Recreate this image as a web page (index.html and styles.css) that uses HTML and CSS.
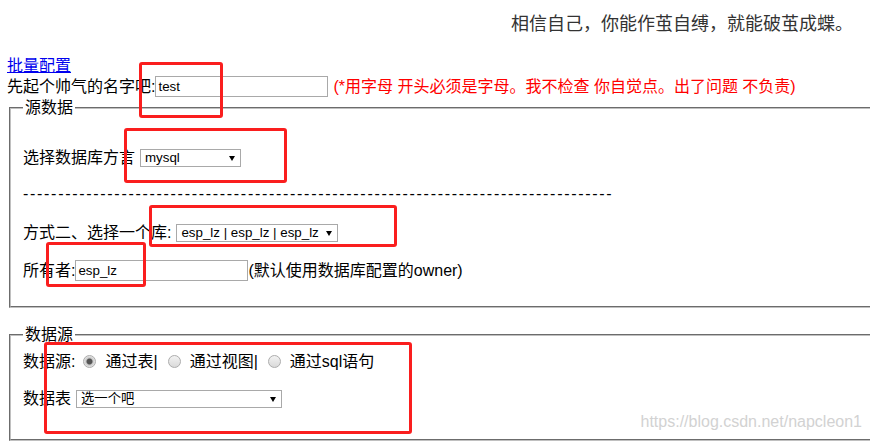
FILE: index.html
```html
<!DOCTYPE html>
<html lang="zh-CN">
<head>
    <meta charset="UTF-8">
    <meta name="viewport" content="width=device-width, initial-scale=1.0">
    <title>代码生成</title>
    <link rel="stylesheet" href="styles.css">
</head>
<body>
    <div class="quote">相信自己，你能作茧自缚，就能破茧成蝶。</div>

    <div class="row-link"><a href="#">批量配置</a></div>
    <div class="row">
        <span>先起个帅气的名字吧:</span><input type="text" class="name-input" value="test">
        <span class="warn">(*用字母 开头必须是字母。我不检查 你自觉点。出了问题 不负责)</span>
    </div>

    <fieldset class="box box-source">
        <legend>源数据</legend>
        <div class="row row-dialect">
            <span>选择数据库方言</span>
            <span class="pick pick-dialect">
                <select>
                    <option>mysql</option>
                    <option>oracle</option>
                </select>
            </span>
        </div>
        <div class="dashes">------------------------------------------------------------------------------------</div>
        <div class="row row-db">
            <span>方式二、选择一个库:</span>
            <span class="pick pick-db">
                <select>
                    <option>esp_lz | esp_lz | esp_lz</option>
                </select>
            </span>
        </div>
        <div class="row row-owner">
            <span>所有者:</span><input type="text" class="owner-input" value="esp_lz"><span>(默认使用数据库配置的owner)</span>
        </div>
    </fieldset>

    <fieldset class="box box-data">
        <legend>数据源</legend>
        <div class="row row-radio">
            <span>数据源:</span>
            <input type="radio" name="from" class="radio" checked>
            <span>通过表|</span>
            <input type="radio" name="from" class="radio">
            <span>通过视图|</span>
            <input type="radio" name="from" class="radio">
            <span>通过sql语句</span>
        </div>
        <div class="row row-table">
            <span>数据表</span>
            <span class="pick pick-table">
                <select>
                    <option>选一个吧</option>
                </select>
            </span>
        </div>
    </fieldset>

    <!-- annotation boxes drawn on the screenshot -->
    <div class="mark mark-name"></div>
    <div class="mark mark-dialect"></div>
    <div class="mark mark-db"></div>
    <div class="mark mark-owner"></div>
    <div class="mark mark-data"></div>

    <div class="watermark">https://blog.csdn.net/napcleon1</div>
</body>
</html>
```

FILE: styles.css
```css
html {
    overflow: hidden;
}
body {
    margin: 0;
    padding: 0 0 0 7px;
    font-family: "Liberation Sans", "Noto Sans CJK SC", sans-serif;
    font-size: 16px;
    line-height: 21px;
    color: #000;
    background: #fff;
}
.quote {
    text-align: right;
    font-size: 18px;
    color: #333;
    padding: 14px 17px 20px 0;
    line-height: 21px;
}
.row-link {
    height: 21px;
}
.row-link a {
    color: #0000ee;
}
.row {
    display: flex;
    align-items: center;
    height: 21px;
    white-space: nowrap;
}
.warn {
    color: #ff0000;
    margin-left: 5px;
}
input[type="text"] {
    box-sizing: border-box;
    width: 173px;
    height: 21px;
    margin: 0;
    padding: 1px 2px;
    border: 1px solid #a9a9a9;
    border-radius: 0;
    font-family: "Liberation Sans", "Noto Sans CJK SC", sans-serif;
    font-size: 13.33px;
    color: #000;
    outline: none;
}

/* fieldsets */
.box {
    margin: 0 -20px 0 2px;
    padding: 0 12px 25px;
    border: 2px groove #c0c0c0;
}
.box legend {
    padding: 0 2px;
    line-height: 21px;
}
.box-data {
    margin-top: 16px;
    padding-bottom: 30px;
}
.row-dialect {
    margin-top: 29px;
}
.dashes {
    margin-top: 15px;
    letter-spacing: 1.7px;
    white-space: nowrap;
    overflow: hidden;
    width: 590px;
}
.row-db {
    margin-top: 18px;
}
.row-owner {
    margin-top: 17px;
}
.row-radio {
    margin-top: 6px;
}
.row-table {
    margin-top: 16px;
}

/* selects */
.pick {
    position: relative;
    display: inline-flex;
    margin-left: 5px;
}
.pick select {
    -webkit-appearance: none;
    appearance: none;
    box-sizing: border-box;
    height: 18px;
    margin: 0;
    padding: 0 0 0 4px;
    border: 1px solid #a9a9a9;
    border-radius: 0;
    background: #fff;
    font-family: "Liberation Sans", "Noto Sans CJK SC", sans-serif;
    font-size: 13.33px;
    line-height: 16px;
    color: #000;
    outline: none;
}
.pick::after {
    content: "";
    position: absolute;
    right: 6px;
    top: 50%;
    margin-top: -2px;
    border-left: 3px solid transparent;
    border-right: 3px solid transparent;
    border-top: 5px solid #000;
    pointer-events: none;
}
.pick-dialect select {
    width: 101px;
}
.pick-db select {
    width: 162px;
}
.pick-table select {
    width: 206px;
}

/* radios */
.radio {
    -webkit-appearance: none;
    appearance: none;
    box-sizing: border-box;
    width: 13px;
    height: 13px;
    margin: 0 9px 0 10px;
    border: 1px solid #acacac;
    border-radius: 50%;
    background: linear-gradient(#f2f2f2, #dadada);
}
.radio:first-of-type {
    margin-left: 8px;
}
.radio:checked {
    background: radial-gradient(circle, #555 0, #555 2.5px, #c8c8c8 3.5px, #ececec 6px);
}

/* red boxes on top of the shot */
.mark {
    position: absolute;
    box-sizing: border-box;
    border: 3px solid #fa1e1e;
    border-radius: 3px;
    pointer-events: none;
}
.mark-name {
    left: 139px;
    top: 62px;
    width: 84px;
    height: 56px;
}
.mark-dialect {
    left: 124px;
    top: 128px;
    width: 163px;
    height: 55px;
}
.mark-db {
    left: 149px;
    top: 205px;
    width: 248px;
    height: 42px;
}
.mark-owner {
    left: 46px;
    top: 242px;
    width: 100px;
    height: 45px;
}
.mark-data {
    left: 44px;
    top: 342px;
    width: 368px;
    height: 92px;
}
.watermark {
    position: absolute;
    right: 8px;
    top: 412px;
    font-family: "Liberation Sans", sans-serif;
    font-size: 16px;
    line-height: 20px;
    color: #d2d2d2;
}
```
